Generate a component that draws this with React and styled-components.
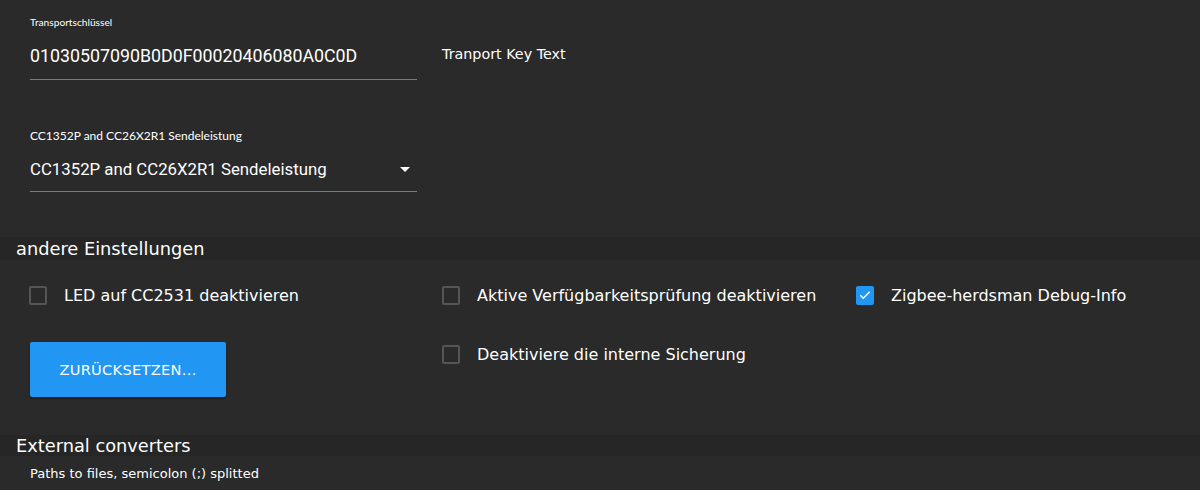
import React, { useState } from 'react';
import styled, { createGlobalStyle } from 'styled-components';

const GlobalStyle = createGlobalStyle`
  body {
    margin: 0;
    padding: 0;
    background-color: #2a2a2a;
    color: #ffffff;
    font-family: "DejaVu Sans", "Noto Sans", sans-serif;
  }
`;

const Page = styled.div`
  width: 1200px;
  height: 490px;
  overflow: hidden;
  background-color: #2a2a2a;
`;

const FieldRow = styled.div`
  display: flex;
  align-items: flex-start;
  padding-left: 30px;
  margin-top: ${({ top }) => top}px;
`;

const Field = styled.div`
  width: 387px;
`;

const Label = styled.div`
  font-family: Lato, "Open Sans", sans-serif;
  font-size: ${({ small }) => (small ? '10.2px' : '12px')};
  line-height: 20px;
  color: #ffffff;
`;

const Value = styled.div`
  display: flex;
  align-items: center;
  justify-content: space-between;
  height: ${({ h }) => h}px;
  border-bottom: 1px solid #7c7c7c;
  font-family: Roboto, "Liberation Sans", sans-serif;
  font-size: ${({ fs }) => fs}px;
  color: #ffffff;
`;

const SideText = styled.div`
  margin: 32px 0 0 25px;
  line-height: 20px;
  font-size: 14.3px;
  font-family: "DejaVu Sans", sans-serif;
  color: #ffffff;
`;

const SectionHeader = styled.div`
  margin-top: ${({ top }) => top}px;
  height: ${({ h }) => h}px;
  line-height: ${({ h }) => h}px;
  padding-left: 16px;
  background-color: #262626;
  font-size: 17.8px;
  color: #ffffff;
`;

const OptionsGrid = styled.div`
  display: grid;
  grid-template-columns: 413px 414px 1fr;
  row-gap: 19px;
  padding-left: 29px;
  margin-top: 15px;
  align-items: start;
`;

const CheckRow = styled.label`
  display: flex;
  align-items: center;
  height: 40px;
  gap: 17px;
  font-size: 16px;
  color: #ffffff;
  cursor: pointer;
`;

const Box = styled.span`
  box-sizing: border-box;
  width: 18px;
  height: 19px;
  border-radius: 2px;
  border: ${({ checked }) => (checked ? 'none' : '2px solid #555555')};
  background-color: ${({ checked }) => (checked ? '#2196f3' : 'transparent')};
  display: flex;
  align-items: center;
  justify-content: center;
  flex-shrink: 0;
`;

const ButtonCell = styled.div`
  padding: 8px 0 0 1px;
`;

const ResetButton = styled.button`
  width: 196px;
  height: 55px;
  border: none;
  border-radius: 2px;
  background-color: #2196f3;
  color: #ffffff;
  font-family: "DejaVu Sans", sans-serif;
  font-size: 14.6px;
  letter-spacing: 0.3px;
  box-shadow: 0 2px 2px rgba(0, 0, 0, 0.35);
  cursor: pointer;
`;

const Hint = styled.div`
  padding-left: 30px;
  margin-top: 8px;
  font-size: 13px;
  line-height: 20px;
  color: #ffffff;
`;

const Check = ({ checked, label, onToggle }) => (
  <CheckRow onClick={onToggle}>
    <Box checked={checked}>
      {checked && (
        <svg width="14" height="14" viewBox="0 0 24 24">
          <path d="M4 12.5l5 5L20 6.5" fill="none" stroke="#ffffff" strokeWidth="2.4" />
        </svg>
      )}
    </Box>
    {label}
  </CheckRow>
);

const App = () => {
  const [opts, setOpts] = useState({ led: false, avail: false, debug: true, backup: false });
  const toggle = (k) => () => setOpts((o) => ({ ...o, [k]: !o[k] }));

  return (
    <Page>
      <GlobalStyle />

      <FieldRow top={12}>
        <Field>
          <Label small>Transportschlüssel</Label>
          <Value h={47} fs={17.8}>01030507090B0D0F00020406080A0C0D</Value>
        </Field>
        <SideText>Tranport Key Text</SideText>
      </FieldRow>

      <FieldRow top={46}>
        <Field>
          <Label>CC1352P and CC26X2R1 Sendeleistung</Label>
          <Value h={45} fs={16.8}>
            CC1352P and CC26X2R1 Sendeleistung
            <svg width="24" height="24" viewBox="0 0 24 24">
              <path d="M7 10l5 5 5-5z" fill="#ffffff" />
            </svg>
          </Value>
        </Field>
      </FieldRow>

      <SectionHeader top={45} h={23}>andere Einstellungen</SectionHeader>

      <OptionsGrid>
        <Check checked={opts.led} label="LED auf CC2531 deaktivieren" onToggle={toggle('led')} />
        <Check checked={opts.avail} label="Aktive Verfügbarkeitsprüfung deaktivieren" onToggle={toggle('avail')} />
        <Check checked={opts.debug} label="Zigbee-herdsman Debug-Info" onToggle={toggle('debug')} />
        <ButtonCell>
          <ResetButton>ZURÜCKSETZEN...</ResetButton>
        </ButtonCell>
        <Check checked={opts.backup} label="Deaktiviere die interne Sicherung" onToggle={toggle('backup')} />
      </OptionsGrid>

      <SectionHeader top={38} h={21}>External converters</SectionHeader>
      <Hint>Paths to files, semicolon (;) splitted</Hint>
    </Page>
  );
};

export default App;
